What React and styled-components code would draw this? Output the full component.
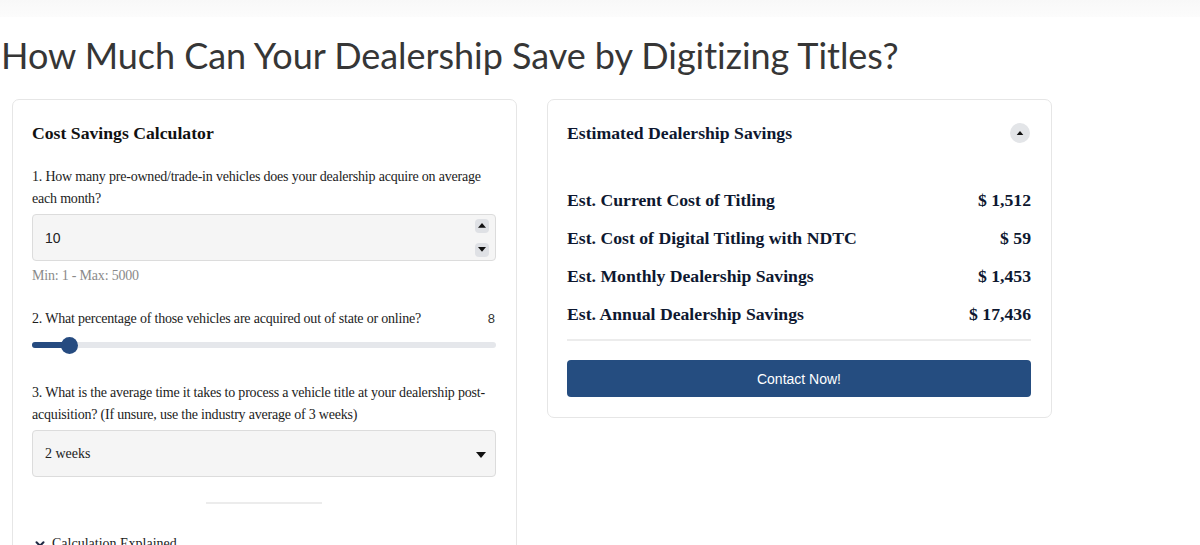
import React from 'react';
import styled, { createGlobalStyle } from 'styled-components';
import { ChevronDown } from 'lucide-react';

const GlobalStyle = createGlobalStyle`
  html, body {
    margin: 0;
    padding: 0;
    background: #ffffff;
  }
  body {
    font-family: "Liberation Serif", "Times New Roman", serif;
    overflow: hidden;
  }
`;

const TopShade = styled.div`
  height: 17px;
  background: linear-gradient(#f8f8f8, #fcfcfc);
`;

const Page = styled.div`
  padding: 0 0 0 1px;
`;

const Title = styled.h1`
  margin: 18px 0 24px;
  font-family: Lato, "Open Sans", sans-serif;
  font-weight: 400;
  font-size: 36px;
  line-height: 40px;
  color: #363636;
  letter-spacing: -0.04px;
`;

const Columns = styled.div`
  display: grid;
  grid-template-columns: 505px 505px;
  gap: 30px;
  align-items: start;
  margin-left: 11px;
`;

const Card = styled.section`
  border: 1px solid #e6e6e6;
  border-radius: 7px;
  padding: 20px 20px 20px 19px;
  background: #fff;
`;

const CardHeader = styled.div`
  display: flex;
  align-items: center;
  justify-content: space-between;
  height: 26px;
`;

const CardTitle = styled.h2`
  margin: 0;
  font-size: 17.7px;
  font-weight: 700;
  line-height: 26px;
  color: ${(p) => p.$color || '#111'};
`;

const Question = styled.div`
  display: flex;
  justify-content: space-between;
  margin-top: ${(p) => p.$top || 20}px;
  font-size: 14px;
  letter-spacing: -0.2px;
  line-height: 22px;
  color: #1c1c1c;
`;

const QuestionValue = styled.span`
  font-family: "Liberation Sans", Arial, sans-serif;
  font-size: 13px;
  letter-spacing: 0;
  color: #333;
  padding-right: 1px;
`;

const Field = styled.div`
  display: flex;
  align-items: center;
  justify-content: space-between;
  margin-top: 4px;
  height: 45px;
  padding: 0 6px 0 12px;
  background: #f5f5f5;
  border: 1px solid #dcdcdc;
  border-radius: 4px;
  font-family: ${(p) => (p.$sans ? '"Liberation Sans", Arial, sans-serif' : '"Liberation Serif", serif')};
  font-size: 14px;
  color: #222;
`;

const Spinner = styled.div`
  display: flex;
  flex-direction: column;
  justify-content: space-between;
  height: 38px;
`;

const SpinButton = styled.span`
  display: flex;
  align-items: center;
  justify-content: center;
  width: 14px;
  height: 14px;
  border-radius: 4px;
  background: #dfe1e5;
`;

const Hint = styled.div`
  margin-top: 4px;
  font-size: 14px;
  letter-spacing: -0.2px;
  line-height: 22px;
  color: #8a8a8a;
`;

const Slider = styled.div`
  height: 30px;
  display: flex;
  align-items: center;
`;

const Track = styled.div`
  position: relative;
  width: 100%;
  height: 6px;
  border-radius: 3px;
  background: #e5e7eb;
`;

const Fill = styled.div`
  height: 100%;
  border-radius: 3px;
  background: #264b80;
`;

const Thumb = styled.span`
  position: absolute;
  top: 50%;
  width: 17px;
  height: 17px;
  margin: -8.5px 0 0 -8.5px;
  border-radius: 50%;
  background: #264b80;
`;

const Divider = styled.hr`
  border: 0;
  border-top: 2px solid #ececec;
  margin: ${(p) => p.$margin};
  width: ${(p) => p.$width || 'auto'};
`;

const Disclosure = styled.div`
  display: flex;
  align-items: center;
  gap: 5px;
  margin-top: 29px;
  font-size: 14px;
  line-height: 22px;
  color: #1c1c1c;
  padding-left: 1px;
`;

const RoundToggle = styled.span`
  display: flex;
  align-items: center;
  justify-content: center;
  width: 20px;
  height: 20px;
  border-radius: 50%;
  background: #e3e5e8;
  margin-right: 1px;
`;

const Rows = styled.div`
  display: flex;
  flex-direction: column;
  gap: 12px;
  margin-top: 41px;
`;

const Row = styled.div`
  display: flex;
  justify-content: space-between;
  font-size: 17.7px;
  font-weight: 700;
  line-height: 26px;
  color: #0e1830;
`;

const ContactButton = styled.button`
  display: block;
  width: 100%;
  height: 37px;
  border: 0;
  border-radius: 4px;
  background: #254d80;
  color: #fff;
  font-family: "Liberation Sans", Arial, sans-serif;
  font-size: 14px;
  cursor: pointer;
`;

const Triangle = ({ up, size = 8, color = '#111' }) => (
  <svg width={size} height={size * 0.6} viewBox="0 0 10 6">
    <path d={up ? 'M0 6 L5 0 L10 6 Z' : 'M0 0 L10 0 L5 6 Z'} fill={color} />
  </svg>
);

const rows = [
  ['Est. Current Cost of Titling', '$ 1,512'],
  ['Est. Cost of Digital Titling with NDTC', '$ 59'],
  ['Est. Monthly Dealership Savings', '$ 1,453'],
  ['Est. Annual Dealership Savings', '$ 17,436'],
];

export default function App() {
  const percent = 8;
  return (
    <>
      <GlobalStyle />
      <TopShade />
      <Page>
        <Title>How Much Can Your Dealership Save by Digitizing Titles?</Title>
        <Columns>
          <Card>
            <CardHeader>
              <CardTitle>Cost Savings Calculator</CardTitle>
            </CardHeader>
            <Question>1. How many pre-owned/trade-in vehicles does your dealership acquire on average each month?</Question>
            <Field $sans>
              <span>10</span>
              <Spinner>
                <SpinButton><Triangle up /></SpinButton>
                <SpinButton><Triangle /></SpinButton>
              </Spinner>
            </Field>
            <Hint>Min: 1 - Max: 5000</Hint>
            <Question $top={21}>
              <span>2. What percentage of those vehicles are acquired out of state or online?</span>
              <QuestionValue>{percent}</QuestionValue>
            </Question>
            <Slider>
              <Track>
                <Fill style={{ width: `${percent}%` }} />
                <Thumb style={{ left: `${percent}%` }} />
              </Track>
            </Slider>
            <Question $top={22}>3. What is the average time it takes to process a vehicle title at your dealership post-acquisition? (If unsure, use the industry average of 3 weeks)</Question>
            <Field>
              <span>2 weeks</span>
              <span style={{ paddingRight: 3 }}><Triangle size={10} /></span>
            </Field>
            <Divider $margin="25px auto 0" $width="116px" />
            <Disclosure>
              <ChevronDown size={14} strokeWidth={3.5} color="#1f2a44" />
              Calculation Explained
            </Disclosure>
          </Card>
          <Card>
            <CardHeader>
              <CardTitle $color="#0e1830">Estimated Dealership Savings</CardTitle>
              <RoundToggle><Triangle up size={8} /></RoundToggle>
            </CardHeader>
            <Rows>
              {rows.map(([label, value]) => (
                <Row key={label}>
                  <span>{label}</span>
                  <span>{value}</span>
                </Row>
              ))}
            </Rows>
            <Divider $margin="12px 0 19px" />
            <ContactButton>Contact Now!</ContactButton>
          </Card>
        </Columns>
      </Page>
    </>
  );
}
